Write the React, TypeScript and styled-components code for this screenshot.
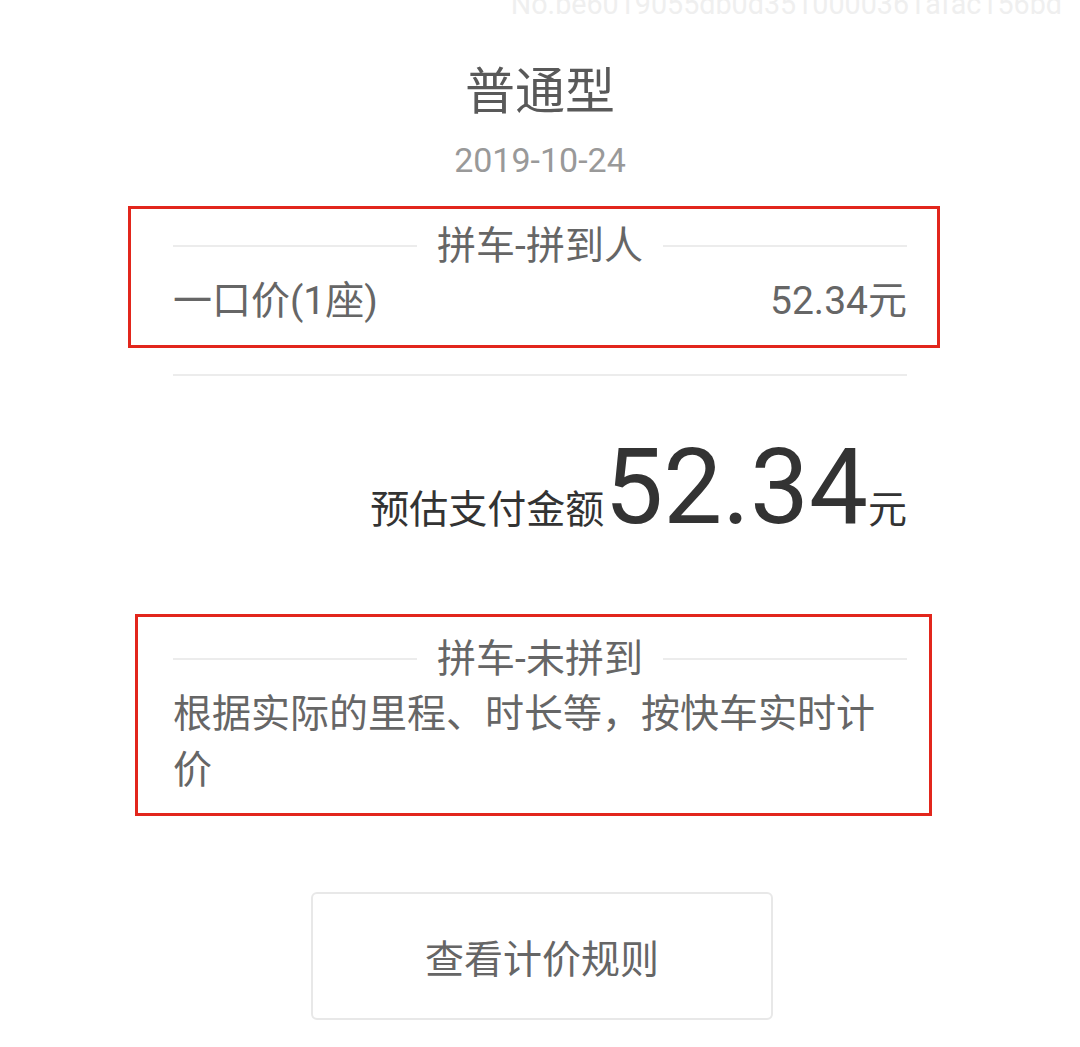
import styled, { createGlobalStyle } from 'styled-components';

const GlobalStyle = createGlobalStyle`
  body {
    margin: 0;
    background: #fff;
    font-family: Roboto, "Noto Sans CJK SC", sans-serif;
  }
`;

const Page = styled.main`
  position: relative;
  width: 1080px;
  height: 1047px;
  overflow: hidden;
  background: #fff;
`;

const Watermark = styled.div`
  position: absolute;
  top: -10px;
  right: 18px;
  font-size: 28.7px;
  line-height: 28px;
  color: #efefef;
  white-space: nowrap;
`;

const Content = styled.div`
  width: 734px;
  margin: 0 auto;
  padding-top: 62px;
  display: flex;
  flex-direction: column;
`;

const CarType = styled.h1`
  margin: 0;
  font-size: 50px;
  line-height: 60px;
  font-weight: 400;
  color: #595959;
  text-align: center;
`;

const DateText = styled.div`
  margin-top: 18px;
  font-size: 34px;
  line-height: 40px;
  color: #999;
  text-align: center;
`;

const Marked = styled.section<{ $left: number; $right: number; $top: number; $bottom: number }>`
  border: 3px solid #e2261c;
  margin-left: ${(p) => -p.$left}px;
  margin-right: ${(p) => -p.$right}px;
  padding: ${(p) => p.$top}px ${(p) => p.$right - 3}px ${(p) => p.$bottom}px
    ${(p) => p.$left - 3}px;
  display: flex;
  flex-direction: column;
`;

const SectionTitle = styled.div`
  display: flex;
  align-items: center;
  gap: 20px;
  font-size: 39px;
  line-height: 48px;
  color: #666;

  &::before,
  &::after {
    content: '';
    flex: 1;
    height: 2px;
    background: #ececec;
  }
`;

const PriceRow = styled.div`
  margin-top: 7px;
  display: flex;
  justify-content: space-between;
  font-size: 39px;
  line-height: 48px;
  color: #666;
`;

const Divider = styled.hr`
  margin: 26px 0 0;
  border: none;
  height: 2px;
  background: #ececec;
`;

const Total = styled.div`
  margin-top: 59px;
  display: flex;
  justify-content: flex-end;
  align-items: baseline;
  color: #333;
`;

const TotalLabel = styled.span`
  font-size: 39px;
  line-height: 48px;
`;

const TotalAmount = styled.span`
  font-size: 105px;
  line-height: 106px;
`;

const Unit = styled.span`
  font-size: 39px;
  line-height: 48px;
`;

const Description = styled.p`
  margin: 3px 0 0;
  font-size: 39px;
  line-height: 56px;
  color: #666;
`;

const RuleButton = styled.button`
  align-self: center;
  margin-top: 76px;
  margin-left: 4px;
  width: 462px;
  height: 128px;
  border: 2px solid #e8e8e8;
  border-radius: 6px;
  background: #fff;
  font-family: inherit;
  font-size: 39px;
  color: #666;
  cursor: pointer;
`;

export default function App() {
  return (
    <Page>
      <GlobalStyle />
      <Watermark>No.be6019055db0d3510000361afac156bd</Watermark>
      <Content>
        <CarType>普通型</CarType>
        <DateText>2019-10-24</DateText>

        <Marked $left={45} $right={33} $top={13} $bottom={20} style={{ marginTop: 26 }}>
          <SectionTitle>拼车-拼到人</SectionTitle>
          <PriceRow>
            <span>一口价(1座)</span>
            <span>52.34元</span>
          </PriceRow>
        </Marked>

        <Divider />

        <Total>
          <TotalLabel>预估支付金额</TotalLabel>
          <TotalAmount>52.34</TotalAmount>
          <Unit>元</Unit>
        </Total>

        <Marked $left={38} $right={25} $top={18} $bottom={15} style={{ marginTop: 73 }}>
          <SectionTitle>拼车-未拼到</SectionTitle>
          <Description>根据实际的里程、时长等，按快车实时计价</Description>
        </Marked>

        <RuleButton>查看计价规则</RuleButton>
      </Content>
    </Page>
  );
}
